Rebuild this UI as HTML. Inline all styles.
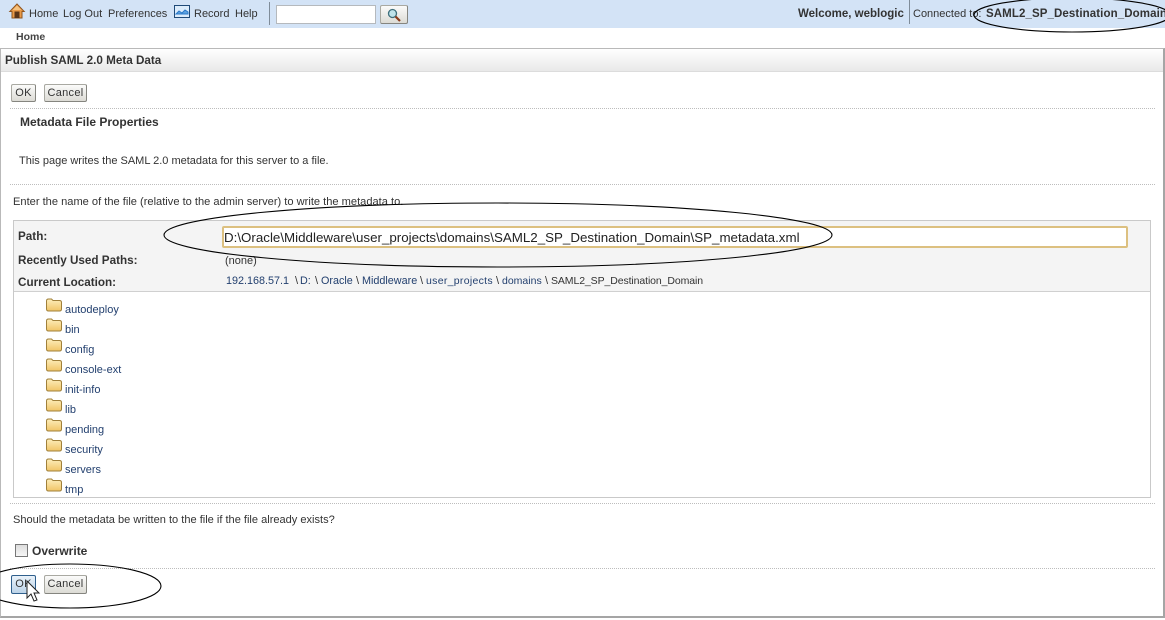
<!DOCTYPE html>
<html><head><meta charset="utf-8"><style>
html,body{margin:0;padding:0;background:#fff}
#p{position:relative;width:1165px;height:620px;overflow:hidden;background:#fff;font-family:"Liberation Sans",sans-serif;font-size:11px;color:#333}
#p div,#p span.t{position:absolute;box-sizing:border-box}
.t{white-space:nowrap;line-height:14px}
.b{font-weight:bold}
.l{color:#23406f}
.btn{background:linear-gradient(#fbfbfa,#dcdbd5);border:1px solid #a9a9a2;border-bottom-color:#85857f;border-right-color:#85857f;border-radius:2px;font-size:11px;line-height:16px;text-align:center;color:#333;letter-spacing:.3px}
.dot{height:0;border-top:1px dotted #bdbdbd}
svg{position:absolute;overflow:visible}
</style></head><body><div id="p">
<div style="left:0;top:0;width:1165px;height:28px;background:#d3e3f6"></div>
<svg style="left:9px;top:3px" width="16" height="16" viewBox="0 0 16 16"><path d="M8 1L.8 8.500h2.200v6.500h10V8.500h2.200z" fill="#ea9a48" stroke="#8f5520"/><path d="M8 2.500L3.500 7h9z" fill="#f6c27e"/><rect x="5.500" y="8.500" width="5" height="6.500" fill="#5a3418"/></svg>
<span class="t" style="left:29px;top:7px">Home</span>
<span class="t" style="left:63px;top:7px">Log Out</span>
<span class="t" style="left:108px;top:7px">Preferences</span>
<svg style="left:174px;top:5px" width="16" height="13" viewBox="0 0 16 13"><rect x=".5" y=".5" width="15" height="12" fill="#dcecfb" stroke="#1f4a78"/><path d="M2 9l3-3 3 2 3-3 3 2v2H2z" fill="#5fa3e0" stroke="#2a78c8"/></svg>
<span class="t" style="left:194px;top:7px">Record</span>
<span class="t" style="left:235px;top:7px">Help</span>
<div style="left:269px;top:2px;width:1px;height:23px;background:#7f8c99"></div>
<div style="left:276px;top:5px;width:100px;height:19px;background:#fff;border:1px solid #b5b9bd"></div>
<div class="btn" style="left:380px;top:5px;width:28px;height:19px"></div>
<svg style="left:387px;top:8px" width="14" height="14" viewBox="0 0 14 14"><circle cx="5.500" cy="5.500" r="4" fill="#bfe3ea" stroke="#3f6f7c" stroke-width="1.3"/><path d="M8.500 8.500L13 13" stroke="#8a3c1c" stroke-width="2.200"/></svg>
<span class="t b" style="left:798px;top:7px;font-size:11.5px">Welcome, weblogic</span>
<div style="left:909px;top:0;width:1px;height:24px;background:#7f8c99"></div>
<span class="t" style="left:913px;top:7px">Connected to:</span>
<span class="t b" style="left:986px;top:7px;font-size:11.5px;letter-spacing:.1px">SAML2_SP_Destination_Domain</span>
<span class="t b" style="left:16px;top:30px;font-size:10.5px;color:#444">Home</span>
<div style="left:0;top:48px;width:1165px;height:570px;border:1px solid #b9b9b9;border-bottom:2px solid #a5a5a5;border-right:2px solid #a5a5a5"></div>
<div style="left:1px;top:49px;width:1162px;height:23px;background:linear-gradient(#fff,#e9e9e9);border-bottom:1px solid #dcdcdc"></div>
<span class="t b" style="left:5px;top:54px;font-size:11.7px;color:#333">Publish SAML 2.0 Meta Data</span>
<div class="btn" style="left:11px;top:84px;width:25px;height:18px">OK</div>
<div class="btn" style="left:44px;top:84px;width:43px;height:18px">Cancel</div>
<div class="dot" style="left:10px;top:108px;width:1145px"></div>
<span class="t b" style="left:20px;top:115px;font-size:12px">Metadata File Properties</span>
<span class="t" style="left:19px;top:154px">This page writes the SAML 2.0 metadata for this server to a file.</span>
<div class="dot" style="left:10px;top:184px;width:1145px"></div>
<span class="t" style="left:13px;top:195px;font-size:11.1px">Enter the name of the file (relative to the admin server) to write the metadata to.</span>
<div style="left:13px;top:220px;width:1138px;height:278px;border:1px solid #c9c9c9;background:#fff"></div>
<div style="left:14px;top:221px;width:1136px;height:71px;background:#f4f4f4;border-bottom:1px solid #d0d0d0"></div>
<span class="t b" style="left:18px;top:230px;font-size:11.7px">Path:</span>
<span class="t b" style="left:18px;top:254px;font-size:11.7px">Recently Used Paths:</span>
<span class="t b" style="left:18px;top:276px;font-size:11.7px">Current Location:</span>
<div style="left:222px;top:226px;width:906px;height:22px;background:#fff;border:2px solid #dcc080;border-radius:2px"></div>
<span class="t" style="left:224px;top:231px;font-size:13.35px;color:#222">D:\Oracle\Middleware\user_projects\domains\SAML2_SP_Destination_Domain\SP_metadata.xml</span>
<span class="t" style="left:225px;top:254px;font-size:11px">(none)</span>
<span class="t l" style="left:226px;top:274px;font-size:10.8px">192.168.57.1</span>
<span class="t" style="left:295px;top:274px">\</span>
<span class="t l" style="left:300px;top:274px;font-size:10.8px">D:</span>
<span class="t" style="left:315px;top:274px">\</span>
<span class="t l" style="left:321px;top:274px;font-size:10.8px">Oracle</span>
<span class="t" style="left:356px;top:274px">\</span>
<span class="t l" style="left:362px;top:274px;font-size:10.8px">Middleware</span>
<span class="t" style="left:420px;top:274px">\</span>
<span class="t l" style="left:426px;top:274px;font-size:10.5px;letter-spacing:.3px">user_projects</span>
<span class="t" style="left:496px;top:274px">\</span>
<span class="t l" style="left:502px;top:274px;font-size:10.5px">domains</span>
<span class="t" style="left:545px;top:274px">\</span>
<span class="t" style="left:551px;top:274px;font-size:10.5px;letter-spacing:-.1px">SAML2_SP_Destination_Domain</span>
<svg style="left:46px;top:298px" width="16" height="200" viewBox="0 0 16 200"><defs><linearGradient id="g" x1="0" y1="0" x2="0" y2="1"><stop offset="0" stop-color="#fdeebc"/><stop offset="1" stop-color="#f0c466"/></linearGradient><g id="f"><path d="M.5 3q0-2 2-2h3l1.500 1.500h6.500q2 0 2 2v6.500q0 2-2 2H2.500q-2 0-2-2z" fill="url(#g)" stroke="#a0803a"/></g></defs><use href="#f" y="0"/><use href="#f" y="20"/><use href="#f" y="40"/><use href="#f" y="60"/><use href="#f" y="80"/><use href="#f" y="100"/><use href="#f" y="120"/><use href="#f" y="140"/><use href="#f" y="160"/><use href="#f" y="180"/></svg>
<span class="t l" style="left:65px;top:303px">autodeploy</span>
<span class="t l" style="left:65px;top:323px">bin</span>
<span class="t l" style="left:65px;top:343px">config</span>
<span class="t l" style="left:65px;top:363px">console-ext</span>
<span class="t l" style="left:65px;top:383px">init-info</span>
<span class="t l" style="left:65px;top:403px">lib</span>
<span class="t l" style="left:65px;top:423px">pending</span>
<span class="t l" style="left:65px;top:443px">security</span>
<span class="t l" style="left:65px;top:463px">servers</span>
<span class="t l" style="left:65px;top:483px">tmp</span>
<div class="dot" style="left:10px;top:503px;width:1145px"></div>
<span class="t" style="left:13px;top:513px;font-size:11.05px">Should the metadata be written to the file if the file already exists?</span>
<div style="left:15px;top:544px;width:13px;height:13px;border:1px solid #777;background:linear-gradient(#ddd,#f6f6f6)"></div>
<span class="t b" style="left:32px;top:544px;font-size:12px">Overwrite</span>
<div class="dot" style="left:10px;top:568px;width:1145px"></div>
<div class="btn" style="left:11px;top:575px;width:25px;height:19px;line-height:17px;background:linear-gradient(#e9f2fa,#bcd3e8);border-color:#2f5f8c">OK</div>
<div class="btn" style="left:44px;top:575px;width:43px;height:19px;line-height:17px">Cancel</div>
<svg style="left:0;top:0" width="1165" height="620" viewBox="0 0 1165 620" fill="none" stroke="#000" stroke-width="1.1">
<ellipse cx="1072" cy="15" rx="98" ry="17"/>
<ellipse cx="498" cy="235" rx="334" ry="32"/>
<ellipse cx="70" cy="586" rx="91" ry="22"/>
<path d="M27 581v17l4-4 3 7 3-1-3-7h5z" fill="#fff" stroke="#222" stroke-width="1"/>
</svg>
</div></body></html>
